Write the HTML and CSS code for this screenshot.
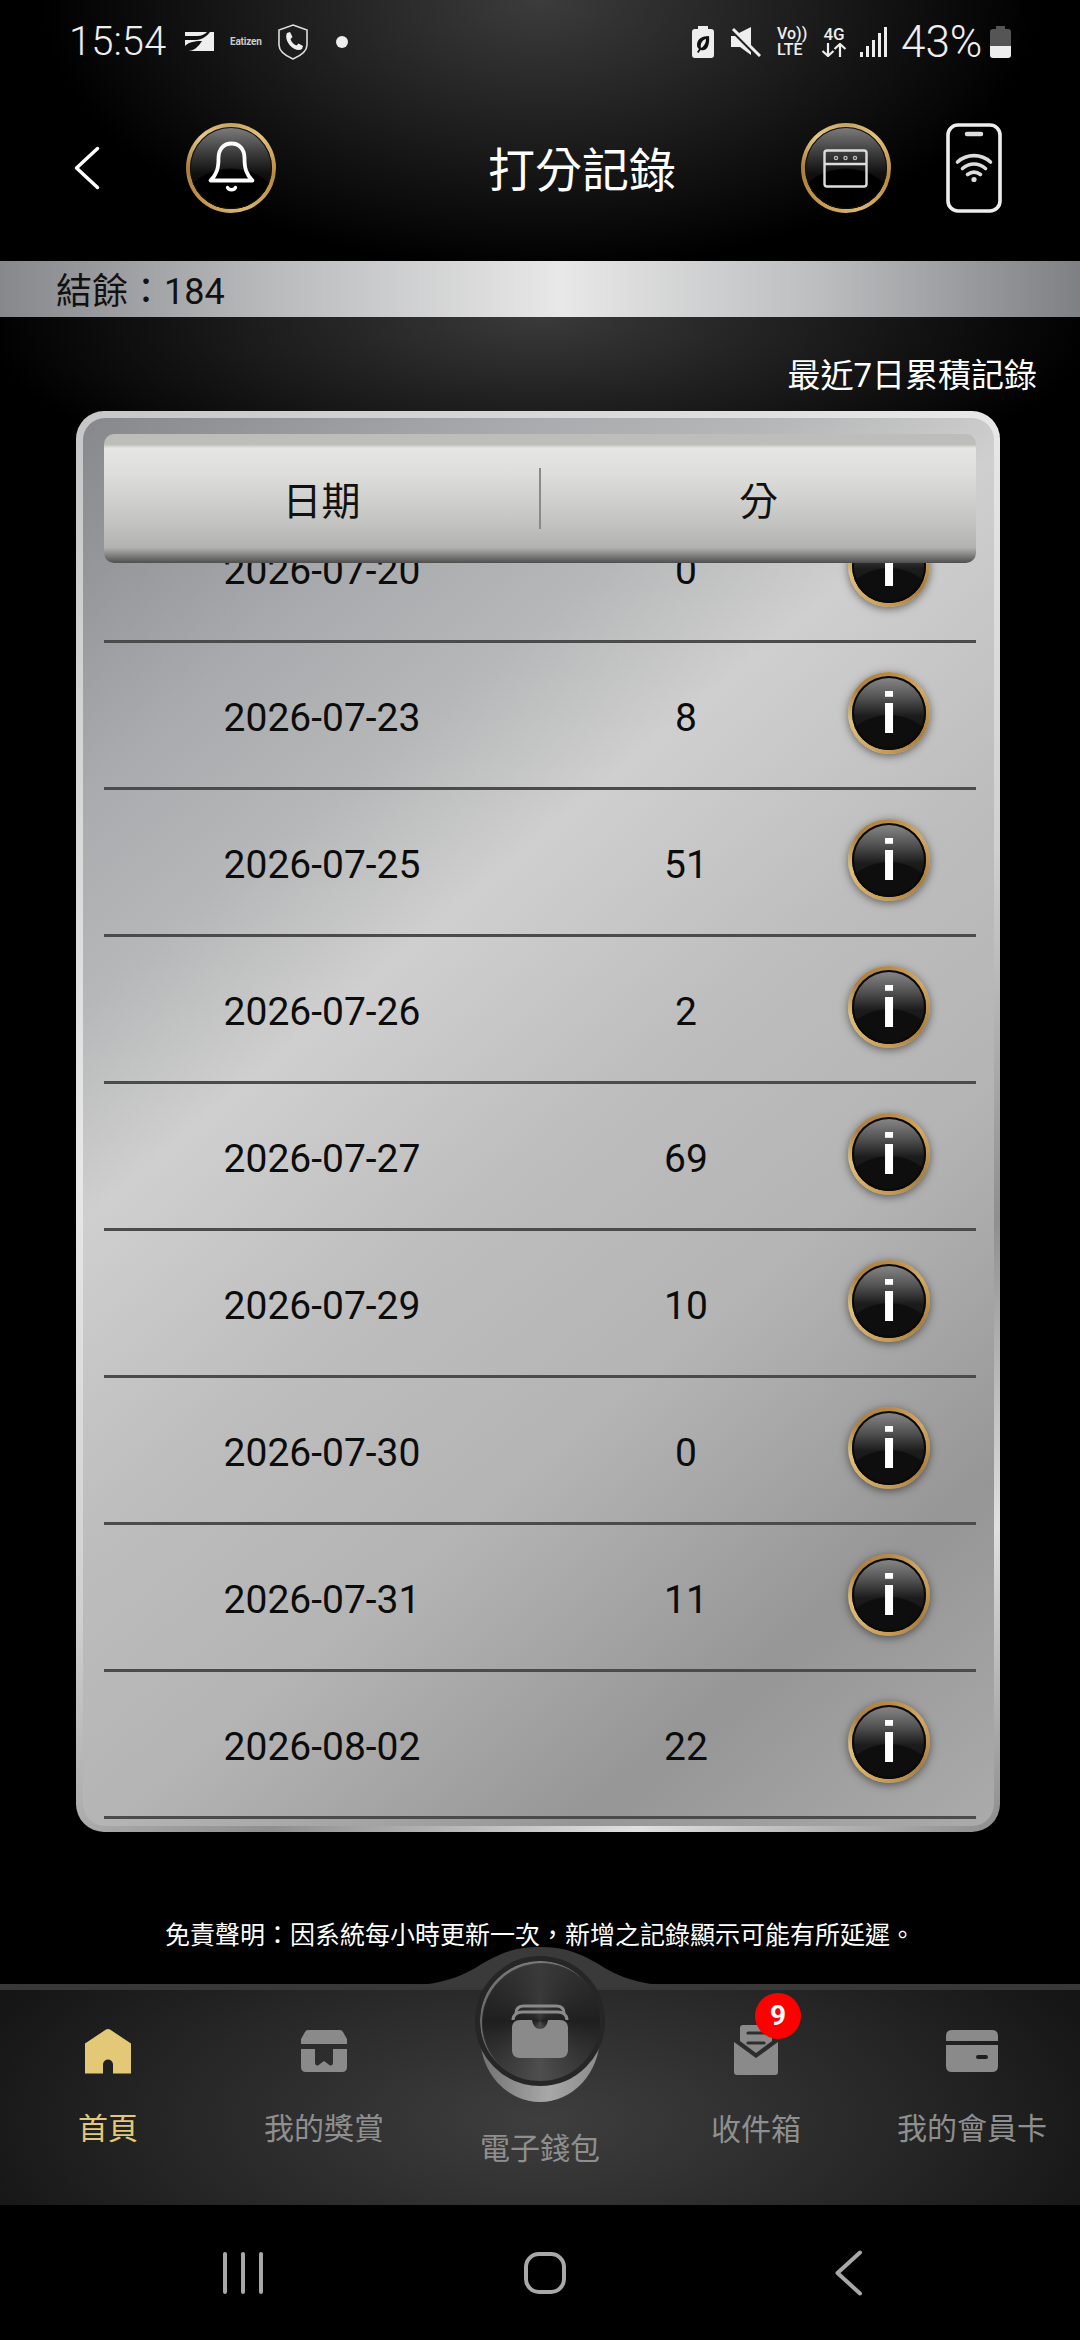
FILE: index.html
```html
<!DOCTYPE html>
<html lang="zh-Hant">
<head>
    <meta charset="UTF-8">
    <title>打分記錄</title>
    <link rel="stylesheet" href="styles.css">
</head>
<body>
<div class="phone">

    <!-- status bar -->
    <div class="status">
        <div class="status-left">
            <span class="clock">15:54</span>
            <svg class="st-nfc" width="29" height="19" viewBox="0 0 29 19">
                <path fill="#eee" d="M0 0H29V19H0Z"/>
                <path fill="#111" d="M0 4H12C17 4 20 2 22 0H25C22 4 17 8 11 8H0ZM0 14C5 9 13 9 17 9C14 14 9 19 3 19H0Z"/>
            </svg>
            <span class="eatizen">Eatizen</span>
            <svg class="st-shield" width="30" height="36" viewBox="0 0 30 36">
                <path fill="none" stroke="#ddd" stroke-width="1.6" d="M15 1L29 6V21C29 28 22 32 15 35C8 32 1 28 1 21V6Z"/>
                <path fill="#eee" d="M9 9L12 8L14.500 13L12.500 15C13.500 18 15.500 20.500 18.500 21.500L20.500 19.500L25 22L24 25C21 27.500 15 25 12 21.500C9 18 7 12.500 9 9Z"/>
            </svg>
            <span class="st-dot"></span>
        </div>
        <div class="status-right">
            <svg width="22" height="32" viewBox="0 0 22 32">
                <path fill="#eee" d="M6 0H16V3H19Q22 3 22 6V29Q22 32 19 32H3Q0 32 0 29V6Q0 3 3 3H6Z"/>
                <path fill="#111" d="M17 10C10 10 5 13 5 19C5 21 6 22 7 23L5 26L6.500 27L8.500 24C15 26 18 19 17 10ZM14 13C14 18 11 21 9 22C8 18 10 14 14 13Z"/>
            </svg>
            <svg class="st-mute" width="30" height="30" viewBox="0 0 30 30">
                <path fill="#eee" d="M20 0V21L6 7ZM0 9H4L20 25V28L9 20H0Z"/>
                <path stroke="#eee" stroke-width="3" d="M2 2L29 29"/>
            </svg>
            <div class="st-volte"><span>Vo))</span><span>LTE</span></div>
            <div class="st-4g">
                <span>4G</span>
                <svg width="26" height="14" viewBox="0 0 26 14">
                    <path fill="none" stroke="#eee" stroke-width="2.200" d="M7 0V13M1.500 8L7 13L12.500 8M19 14V1M13.500 6L19 1L24.500 6"/>
                </svg>
            </div>
            <svg class="st-signal" width="27" height="30" viewBox="0 0 27 30">
                <path fill="#eee" d="M0 25H3V30H0ZM6 19H9V30H6ZM12 13H15V30H12ZM18 6H21V30H18ZM24 0H27V30H24Z"/>
            </svg>
            <span class="battery-pct">43%</span>
            <svg class="st-batt" width="21" height="32" viewBox="0 0 21 32">
                <path fill="#555" d="M6 0H15V3H18Q21 3 21 6V20H0V6Q0 3 3 3H6Z"/>
                <path fill="#eee" d="M0 20H21V29Q21 32 18 32H3Q0 32 0 29Z"/>
            </svg>
        </div>
    </div>

    <!-- header -->
    <div class="app-head">
        <svg class="back" width="26" height="44" viewBox="0 0 26 44">
            <path fill="none" stroke="#fff" stroke-width="3.500" stroke-linecap="round" stroke-linejoin="round" d="M23.500 2.500L2.500 22L23.500 41.500"/>
        </svg>
        <div class="gold-btn">
            <svg width="90" height="90" viewBox="0 0 90 90">
                <path fill="none" stroke="#fff" stroke-width="3.800" stroke-linejoin="round" d="M24.500 57.500H66.500C60 51 58.500 45 58.500 35C58.500 26 53 20.500 45.500 20.500C38 20.500 32.500 26 32.500 35C32.500 45 31 51 24.500 57.500Z"/>
                <path fill="none" stroke="#fff" stroke-width="3.400" stroke-linecap="round" d="M41.500 64.500C43 67.500 48 67.500 49.500 64.500"/>
            </svg>
        </div>
        <h1 class="title">打分記錄</h1>
        <div class="gold-btn push-right">
            <svg width="90" height="90" viewBox="0 0 90 90">
                <rect x="23.500" y="27.500" width="42" height="36" rx="2.500" fill="none" stroke="#ddd" stroke-width="2.400"/>
                <path stroke="#ddd" stroke-width="2.400" d="M23.500 41H65.500"/>
                <g fill="none" stroke="#bbb" stroke-width="1.300">
                    <circle cx="35" cy="35" r="1.600"/>
                    <circle cx="44.500" cy="35" r="1.600"/>
                    <circle cx="54" cy="35" r="1.600"/>
                </g>
            </svg>
        </div>
        <svg class="phone-wifi" width="56" height="90" viewBox="0 0 56 90">
            <rect x="2" y="2" width="52" height="86" rx="10" fill="#000" stroke="#eee" stroke-width="3.600"/>
            <path stroke="#ddd" stroke-width="4.500" stroke-linecap="round" d="M21 11H35"/>
            <g fill="none" stroke="#ddd" stroke-width="3.600" stroke-linecap="round">
                <path d="M11.500 39C21 30.500 35 30.500 44.500 39"/>
                <path d="M16.500 45.500C23.500 39.500 32.500 39.500 39.500 45.500"/>
                <path d="M21.500 51.500C25.500 48.500 30.500 48.500 34.500 51.500"/>
            </g>
            <circle cx="28" cy="56.500" r="2.600" fill="#ddd"/>
        </svg>
    </div>

    <div class="balance">結餘&#xFF1A;184</div>

    <!-- records -->
    <div class="records">
        <div class="recent">最近7日累積記錄</div>

        <div class="frame">
            <div class="card">
                <div class="t-head">
                    <div class="t-head-cell">日期</div>
                    <div class="t-head-cell">分</div>
                </div>
                <div class="t-rows">
                    <div class="t-row"><span>2026-07-20</span><span>0</span><div class="info"><span>i</span></div></div>
                    <div class="t-row"><span>2026-07-23</span><span>8</span><div class="info"><span>i</span></div></div>
                    <div class="t-row"><span>2026-07-25</span><span>51</span><div class="info"><span>i</span></div></div>
                    <div class="t-row"><span>2026-07-26</span><span>2</span><div class="info"><span>i</span></div></div>
                    <div class="t-row"><span>2026-07-27</span><span>69</span><div class="info"><span>i</span></div></div>
                    <div class="t-row"><span>2026-07-29</span><span>10</span><div class="info"><span>i</span></div></div>
                    <div class="t-row"><span>2026-07-30</span><span>0</span><div class="info"><span>i</span></div></div>
                    <div class="t-row"><span>2026-07-31</span><span>11</span><div class="info"><span>i</span></div></div>
                    <div class="t-row"><span>2026-08-02</span><span>22</span><div class="info"><span>i</span></div></div>
                </div>
            </div>
        </div>

        <p class="note">免責聲明&#xFF1A;因系統每小時更新一次&#xFF0C;新增之記錄顯示可能有所延遲。</p>
    </div>

    <!-- bottom tabs -->
    <div class="tabs">
        <svg class="hump" width="320" height="42" viewBox="0 0 320 42">
            <path fill="#3a3a3a" d="M0 42C50 42 75 36 100 20C125 5 140 2 160 2C180 2 195 5 220 20C245 36 270 42 320 42Z"/>
        </svg>
        <div class="tab tab-on">
            <svg width="46" height="45" viewBox="0 0 46 45">
                <path fill="#e3c878" d="M21 1Q23 0 25 1L46 15V45H28V36A5 5 0 0 0 18 36V45H0V15Z"/>
            </svg>
            <span>首頁</span>
        </div>
        <div class="tab">
            <svg width="46" height="42" viewBox="0 0 46 42">
                <path fill="#8a8a8a" d="M7 0H39Q41 0 42 2L46 9V14H0V9L4 2Q5 0 7 0Z"/>
                <path fill="#8a8a8a" d="M0 19H14V32Q14 36 17 35.500L23 31L29 35.500Q32 36 32 32V19H46V37Q46 42 41 42H5Q0 42 0 37Z"/>
            </svg>
            <span>我的獎賞</span>
        </div>
        <div class="tab tab-wallet">
            <div class="wallet-rim"></div>
            <div class="wallet-btn">
                <svg width="58" height="54" viewBox="0 0 58 54">
                    <path fill="none" stroke="#8a8a8a" stroke-width="3" d="M5 9C5 4 8 2 13 2H45C50 2 53 4 53 9"/>
                    <path fill="none" stroke="#8a8a8a" stroke-width="3" d="M2 16C2 11 6 8 11 8H47C52 8 56 11 56 16"/>
                    <path fill="#8a8a8a" d="M9 16H21C22 22 25 25 29 25C33 25 36 22 37 16H49C54 16 57 19 57 24V46C57 51 54 54 49 54H9C4 54 1 51 1 46V24C1 19 4 16 9 16Z"/>
                </svg>
            </div>
            <span>電子錢包</span>
        </div>
        <div class="tab">
            <div class="inbox">
                <svg width="44" height="50" viewBox="0 0 44 50">
                    <path fill="#8a8a8a" d="M6 3Q6 0 9 0H35Q38 0 38 3V16L22 28L6 16Z"/>
                    <path fill="#8a8a8a" d="M0 17L22 33L44 17V47Q44 50 41 50H3Q0 50 0 47Z"/>
                    <path stroke="#2e2e2e" stroke-width="3.200" stroke-linecap="round" d="M14 8H30M14 18H30"/>
                </svg>
                <span class="badge">9</span>
            </div>
            <span>收件箱</span>
        </div>
        <div class="tab">
            <svg width="52" height="42" viewBox="0 0 52 42">
                <path fill="#8a8a8a" d="M6 0H46Q52 0 52 6V11H0V6Q0 0 6 0ZM0 15H52V36Q52 42 46 42H6Q0 42 0 36ZM32 25Q30 25 30 27Q30 29 32 29H40Q42 29 42 27Q42 25 40 25Z" fill-rule="evenodd"/>
            </svg>
            <span>我的會員卡</span>
        </div>
    </div>

    <!-- android nav -->
    <div class="sys-nav">
        <svg width="40" height="42" viewBox="0 0 40 42">
            <path stroke="#a8a8a8" stroke-width="4" stroke-linecap="round" d="M2 2V40M20 2V40M38 2V40"/>
        </svg>
        <svg class="nav-home" width="42" height="42" viewBox="0 0 42 42">
            <rect x="2" y="2" width="38" height="38" rx="13" fill="none" stroke="#a8a8a8" stroke-width="4"/>
        </svg>
        <svg class="nav-back" width="28" height="46" viewBox="0 0 28 46">
            <path fill="none" stroke="#a8a8a8" stroke-width="4" stroke-linecap="round" stroke-linejoin="round" d="M25 2.500L2.500 23L25 43.500"/>
        </svg>
    </div>

</div>
</body>
</html>
```

FILE: styles.css
```css
* {
    box-sizing: border-box;
}
html, body {
    margin: 0;
    padding: 0;
    background: #000;
}
.phone {
    width: 1080px;
    height: 2340px;
    overflow: hidden;
    display: flex;
    flex-direction: column;
    color: #fff;
    font-family: Roboto, "Noto Sans CJK TC", sans-serif;
    background: radial-gradient(ellipse 500px 270px at 540px 0, #3c3c3c 0%, #181818 60%, #000 100%) no-repeat #000;
}

/* status bar */
.status {
    height: 80px;
    padding: 3px 69px 0 69px;
    display: flex;
    justify-content: space-between;
    align-items: center;
    color: #eee;
}
.status-left, .status-right {
    display: flex;
    align-items: center;
}
.clock {
    font-size: 40px;
    font-weight: 300;
    width: 116px;
}
.eatizen {
    font-size: 10px;
    font-weight: 700;
    color: #ccc;
    margin-left: 16px;
    width: 32px;
    letter-spacing: -0.2px;
}
.st-shield {
    margin-left: 16px;
}
.st-dot {
    width: 12px;
    height: 12px;
    border-radius: 50%;
    background: #eee;
    margin-left: 28px;
}
.status-right svg {
    display: block;
}
.st-mute {
    margin-left: 17px;
}
.st-volte {
    margin-left: 16px;
    width: 31px;
    display: flex;
    flex-direction: column;
    font-size: 16px;
    font-weight: 500;
    line-height: 16px;
    white-space: nowrap;
}
.st-4g {
    margin-left: 13px;
    width: 26px;
    display: flex;
    flex-direction: column;
    align-items: center;
    font-size: 17px;
    font-weight: 500;
    line-height: 17px;
}
.st-signal {
    margin-left: 13px;
}
.battery-pct {
    font-size: 44px;
    font-weight: 300;
    margin-left: 14px;
    width: 88px;
}
.st-batt {
    margin-left: 1px;
}

/* header */
.app-head {
    height: 181px;
    padding: 0 78px 5px 74px;
    display: flex;
    align-items: center;
}
.back {
    flex: none;
}
.gold-btn {
    flex: none;
    width: 90px;
    height: 90px;
    margin-left: 86px;
    border-radius: 50%;
    position: relative;
    border: 4px solid transparent;
    background:
        radial-gradient(ellipse 62% 50% at 50% 100%, #000 96%, transparent 100%) padding-box,
        linear-gradient(#7d7d7d 0%, #3f3f3f 30%, #111 56%, #000 100%) padding-box,
        conic-gradient(#c9a25e, #e2c27e 12%, #b8883f 28%, #d9b56e 45%, #c79a52 60%, #a87c3c 75%, #e6c88a 88%, #c9a25e) border-box;
    box-shadow: inset 0 0 0 1px #111;
}
.gold-btn svg {
    position: absolute;
    top: -4px;
    left: -4px;
}
.push-right {
    margin-left: auto;
}
.title {
    margin: 0 0 0 212px;
    padding-top: 6px;
    font-size: 47px;
    font-weight: 400;
    line-height: 60px;
    white-space: nowrap;
}
.phone-wifi {
    flex: none;
    margin-left: 55px;
}

/* balance */
.balance {
    height: 56px;
    padding-left: 56px;
    font-size: 36px;
    line-height: 63px;
    color: #111;
    background: linear-gradient(90deg, #87888b 0%, #b9babc 25%, #e8e8e8 52%, #bcbdbf 76%, #7f8083 100%);
}

/* records */
.records {
    flex: 1;
    padding-top: 38px;
    background: radial-gradient(ellipse 560px 190px at 540px 0, #3a3a3a 0%, #1a1a1a 55%, #000 100%) no-repeat;
}
.recent {
    text-align: right;
    padding-right: 43px;
    font-size: 33px;
    line-height: 42px;
}
.frame {
    width: 924px;
    height: 1421px;
    margin: 14px 0 0 76px;
    padding: 7px 6px 6px 7px;
    border-radius: 28px;
    background: linear-gradient(140deg, #c6c6c8 0%, #e8e8e8 35%, #d0d0d0 55%, #8f8f8f 72%, #e0e0e0 86%, #8c8c8c 100%);
}
.card {
    height: 100%;
    padding: 16px 18px 0 21px;
    border-radius: 22px;
    overflow: hidden;
    background: linear-gradient(140deg, #87888b 0%, #a9aaad 17%, #b6b7b8 27%, #cfcfcf 37%, #bdbdbd 52%, #b4b4b4 66%, #969696 84%, #ababab 100%);
}
.t-head {
    position: relative;
    z-index: 2;
    height: 129px;
    display: flex;
    color: #111;
    border-radius: 10px;
    background: linear-gradient(#bdbdb9 0%, #bdbdb9 8%, #e6e6e4 11%, #dededc 30%, #c6c6c4 65%, #b2b2b0 88%, #8a8a88 93%, #4e4e4e 100%);
}
.t-head-cell {
    flex: 1;
    height: 61px;
    margin-top: 34px;
    font-size: 39px;
    line-height: 68px;
    text-align: center;
}
.t-head-cell + .t-head-cell {
    border-left: 2px solid #8a8a8a;
}
.t-rows {
    margin-top: -67px;
}
.t-row {
    height: 147px;
    border-bottom: 3px solid #4b4b4b;
    display: grid;
    grid-template-columns: 436px 292px 114px;
    align-items: center;
    justify-items: center;
    font-size: 39px;
    color: #0c0c0c;
    padding-top: 5px;
}
.info {
    width: 82px;
    height: 82px;
    margin-top: -9px;
    border-radius: 50%;
    border: 4px solid transparent;
    display: flex;
    align-items: center;
    justify-content: center;
    font-family: "Liberation Sans", sans-serif;
    font-size: 58px;
    font-weight: 700;
    line-height: 74px;
    color: #fff;
    background:
        radial-gradient(ellipse 62% 48% at 50% 100%, #0e0e0e 96%, transparent 100%) padding-box,
        linear-gradient(#8a8a8a 0%, #555 28%, #1c1c1c 54%, #0e0e0e 100%) padding-box,
        conic-gradient(#b98a45, #d3a862 15%, #a97d3e 35%, #c79a55 50%, #e0bf78 72%, #a98044 85%, #b98a45) border-box;
    box-shadow: inset 0 0 0 2px #0a0a0a, 0 2px 8px rgba(0, 0, 0, 0.5);
}
.note {
    margin: 82px 0 0;
    text-align: center;
    font-size: 25px;
    line-height: 44px;
}

/* tabs */
.tabs {
    height: 221px;
    position: relative;
    display: grid;
    grid-template-columns: repeat(5, 216px);
    border-top: 6px solid #383838;
    background: radial-gradient(ellipse 620px 260px at 540px 130px, #3e3e3e 0%, #262626 60%, #141414 100%);
}
.hump {
    position: absolute;
    top: -45px;
    left: 380px;
}
.tab {
    display: flex;
    flex-direction: column;
    align-items: center;
    position: relative;
    padding-top: 38px;
    font-size: 30px;
    line-height: 44px;
    color: #8f8f8f;
}
.tab > svg, .inbox {
    height: 46px;
    margin-bottom: 33px;
    flex: none;
}
.tab-on {
    color: #e3c878;
}
.tab-wallet span {
    margin-top: 99px;
}
.wallet-rim {
    position: absolute;
    top: -8px;
    left: 48px;
    width: 120px;
    height: 120px;
    border-radius: 50% 50% 50% 50% / 45% 45% 55% 55%;
    background: linear-gradient(95deg, #6b6b6b 0%, #a8a8a8 60%, #888 100%);
}
.wallet-btn {
    position: absolute;
    top: -34px;
    left: 43px;
    width: 130px;
    height: 130px;
    padding-top: 20px;
    border-radius: 50%;
    border: 5px solid #262626;
    display: flex;
    align-items: center;
    justify-content: center;
    background: conic-gradient(#3a3a3a 0deg, #1f1f1f 90deg, #4e4e4e 180deg, #1f1f1f 270deg, #3a3a3a 360deg);
    box-shadow: inset 2px 2px 1px rgba(255, 255, 255, 0.35);
}
.inbox {
    position: relative;
    height: 50px;
    margin-top: -3px;
    margin-bottom: 33px;
}
.badge {
    position: absolute;
    top: -32px;
    left: 21px;
    width: 46px;
    height: 46px;
    border-radius: 50%;
    background: #f00;
    color: #fff;
    font-size: 28px;
    font-weight: 700;
    line-height: 46px;
    text-align: center;
}

/* android nav */
.sys-nav {
    height: 135px;
    padding-left: 223px;
    display: flex;
    align-items: center;
    background: #000;
}
.nav-home {
    margin-left: 261px;
}
.nav-back {
    margin-left: 269px;
}
```
